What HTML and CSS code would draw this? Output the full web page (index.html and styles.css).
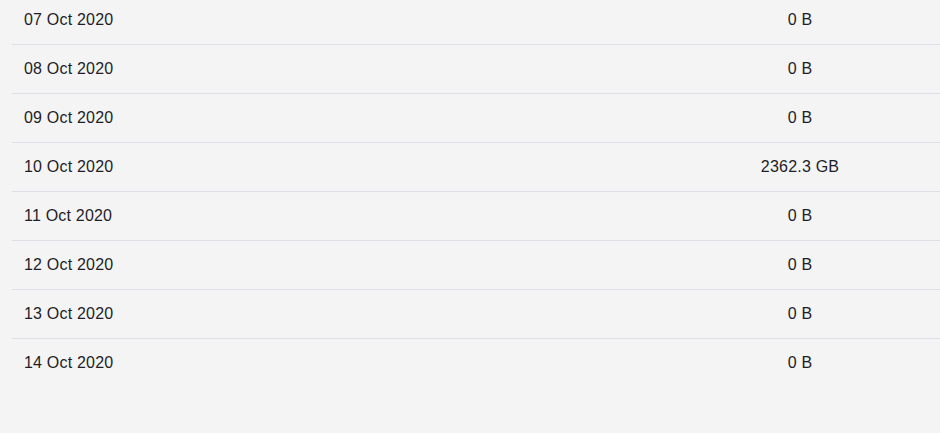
FILE: index.html
```html
<!DOCTYPE html>
<html>
<head>
<meta charset="utf-8">
<link rel="stylesheet" href="styles.css">
</head>
<body>
<div class="table">
  <div class="row"><div class="date">07 Oct 2020</div><div class="size">0 B</div></div>
  <div class="row"><div class="date">08 Oct 2020</div><div class="size">0 B</div></div>
  <div class="row"><div class="date">09 Oct 2020</div><div class="size">0 B</div></div>
  <div class="row"><div class="date">10 Oct 2020</div><div class="size">2362.3 GB</div></div>
  <div class="row"><div class="date">11 Oct 2020</div><div class="size">0 B</div></div>
  <div class="row"><div class="date">12 Oct 2020</div><div class="size">0 B</div></div>
  <div class="row"><div class="date">13 Oct 2020</div><div class="size">0 B</div></div>
  <div class="row last"><div class="date">14 Oct 2020</div><div class="size">0 B</div></div>
</div>
</body>
</html>
```
FILE: styles.css
```css
html, body {
  margin: 0;
  padding: 0;
  background: #f4f4f4;
  overflow: hidden;
}
body {
  font-family: "Liberation Sans", Arial, sans-serif;
  font-size: 16px;
  letter-spacing: 0.2px;
  color: #1e1e28;
}
.table {
  margin: -4px 0 0 12px;
}
.row {
  display: grid;
  grid-template-columns: 1fr 280px;
  align-items: center;
  height: 48px;
  border-bottom: 1px solid #dedee4;
}
.row.last {
  border-bottom: none;
}
.date {
  padding-left: 12px;
}
.size {
  text-align: center;
}
```
